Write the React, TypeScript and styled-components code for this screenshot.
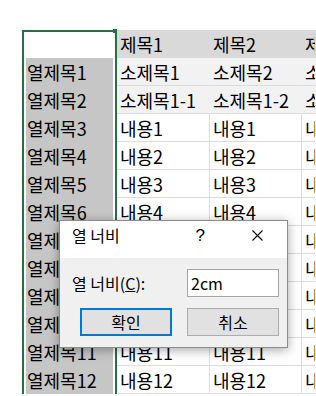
import React, { FC } from "react";
import styled, { createGlobalStyle } from "styled-components";

const Colors = {
  Green: "#217346",
  Grid: "#dcdcdc",
  Header: "#d9d9d9",
  Sub: "#f2f2f2",
  Selected: "#c6c6c6",
  DialogBody: "#f0f0f0",
  Accent: "#0078d7",
};

type Tone = "header" | "sub" | "body";

const tones: Tone[] = [
  "header",
  "sub",
  "sub",
  ...Array.from({ length: 10 }, () => "body" as Tone),
];

const bodyValues = [
  "내용1",
  "내용2",
  "내용3",
  "내용4",
  "내용5",
  "내용6",
  "내용7",
  "내용8",
  "내용11",
  "내용12",
];

const columns = [
  { key: "b", width: 93, cells: ["제목1", "소제목1", "소제목1-1", ...bodyValues] },
  { key: "c", width: 92, cells: ["제목2", "소제목2", "소제목1-2", ...bodyValues] },
  { key: "d", width: 0, cells: ["제목3", "소제목3", "소제목1-3", ...bodyValues] },
];

const rowTitles = Array.from({ length: 12 }, (_, i) => `열제목${i + 1}`);

const GlobalStyle = createGlobalStyle`
  html, body {
    margin: 0;
    padding: 0;
    background: #fff;
    overflow: hidden;
  }
  body {
    font-family: "Noto Sans CJK KR", "Noto Sans", sans-serif;
    color: #000;
  }
`;

const App: FC = () => {
  return (
    <Page>
      <GlobalStyle />
      <Sheet>
        <SelectedColumn>
          <Handle />
          <ActiveCell />
          {rowTitles.map(t => (
            <SelectedCell key={t}>{t}</SelectedCell>
          ))}
        </SelectedColumn>
        {columns.map(col => (
          <Column key={col.key} $width={col.width}>
            {col.cells.map((c, i) => (
              <Cell key={i} $tone={tones[i]} $last={col.width === 0}>
                {c}
              </Cell>
            ))}
          </Column>
        ))}
      </Sheet>
      <Dialog>
        <TitleBar>
          <Title>열 너비</Title>
          <TitleButtons>
            <Help>?</Help>
            <CloseIcon width="11" height="11" viewBox="0 0 11 11">
              <path d="M0.5 0.5 L10.5 10.5 M10.5 0.5 L0.5 10.5" stroke="#000" strokeWidth="1.1" />
            </CloseIcon>
          </TitleButtons>
        </TitleBar>
        <DialogBody>
          <Label>
            열 너비(<u>C</u>):
          </Label>
          <Input defaultValue="2cm" />
          <Button $primary>확인</Button>
          <Button $cancel>취소</Button>
        </DialogBody>
      </Dialog>
    </Page>
  );
};

export default App;

const Page = styled.div`
  position: relative;
  width: 316px;
  height: 396px;
  overflow: hidden;
  padding: 30px 0 0 22px;
  box-sizing: border-box;
`;

const Sheet = styled.div`
  display: flex;
  align-items: flex-start;
  font-size: 18px;
`;

const SelectedColumn = styled.div`
  position: relative;
  width: 95px;
  flex: none;
  box-sizing: border-box;
  border: 2px solid ${Colors.Green};
  border-bottom: none;
  padding: 0 2px;
  background: #fff;
  display: flex;
  flex-direction: column;
`;

const Handle = styled.div`
  position: absolute;
  top: -3px;
  right: -2px;
  width: 4px;
  height: 4px;
  background: ${Colors.Green};
`;

const ActiveCell = styled.div`
  height: 26px;
  background: #fff;
`;

const SelectedCell = styled.div`
  height: 28px;
  display: flex;
  align-items: center;
  padding-left: 1px;
  background: ${Colors.Selected};
  white-space: nowrap;
  line-height: 1;
`;

const Column = styled.div<{ $width: number }>`
  display: flex;
  flex-direction: column;
  ${p => (p.$width ? `width: ${p.$width}px; flex: none;` : "flex: 1; min-width: 0;")}
`;

const Cell = styled.div<{ $tone: Tone; $last?: boolean }>`
  height: 28px;
  box-sizing: border-box;
  display: flex;
  align-items: center;
  padding-left: 3px;
  white-space: nowrap;
  overflow: hidden;
  line-height: 1;
  background: ${p => (p.$tone === "header" ? Colors.Header : p.$tone === "sub" ? Colors.Sub : "#fff")};
  border-bottom: 1px solid ${p => (p.$tone === "header" ? Colors.Header : Colors.Grid)};
  border-right: 1px solid
    ${p => (p.$last ? "transparent" : p.$tone === "body" ? Colors.Grid : p.$tone === "header" ? Colors.Header : Colors.Sub)};
`;

const Dialog = styled.div`
  position: absolute;
  left: 59px;
  top: 220px;
  width: 229px;
  height: 128px;
  box-sizing: border-box;
  border: 1px solid #8c8c8c;
  background: #fff;
  box-shadow: 0 2px 10px rgba(0, 0, 0, 0.35);
  display: flex;
  flex-direction: column;
  font-size: 16px;
`;

const TitleBar = styled.div`
  height: 37px;
  flex: none;
  display: flex;
  align-items: flex-start;
  justify-content: space-between;
  padding: 6px 0 0 12px;
  box-sizing: border-box;
  background: #fff;
`;

const Title = styled.span`
  line-height: 17px;
`;

const TitleButtons = styled.div`
  display: flex;
  align-items: center;
  height: 17px;
`;

const Help = styled.span`
  font-size: 17px;
  line-height: 17px;
  margin-right: 47px;
  font-family: "Liberation Sans", sans-serif;
`;

const CloseIcon = styled.svg`
  margin-right: 24px;
  display: block;
`;

const DialogBody = styled.div`
  flex: 1;
  background: ${Colors.DialogBody};
  display: grid;
  grid-template-columns: 20px 92px 15px 92px;
  grid-template-rows: 28px 28px;
  row-gap: 11px;
  padding-top: 11px;
  align-items: center;
`;

const Label = styled.label`
  grid-column: 1 / 4;
  margin-left: 12px;
  white-space: nowrap;
  line-height: 1;
`;

const Input = styled.input`
  grid-column: 4;
  height: 28px;
  box-sizing: border-box;
  border: 1px solid #a5a5a5;
  background: #fff;
  padding: 0 3px;
  font: inherit;
  outline: none;
`;

const Button = styled.button<{ $primary?: boolean; $cancel?: boolean }>`
  grid-column: ${p => (p.$cancel ? 4 : 2)};
  height: 28px;
  box-sizing: border-box;
  background: #e1e1e1;
  border: ${p => (p.$primary ? `2px solid ${Colors.Accent}` : "1px solid #adadad")};
  font: inherit;
  color: #000;
  padding: 0;
`;
